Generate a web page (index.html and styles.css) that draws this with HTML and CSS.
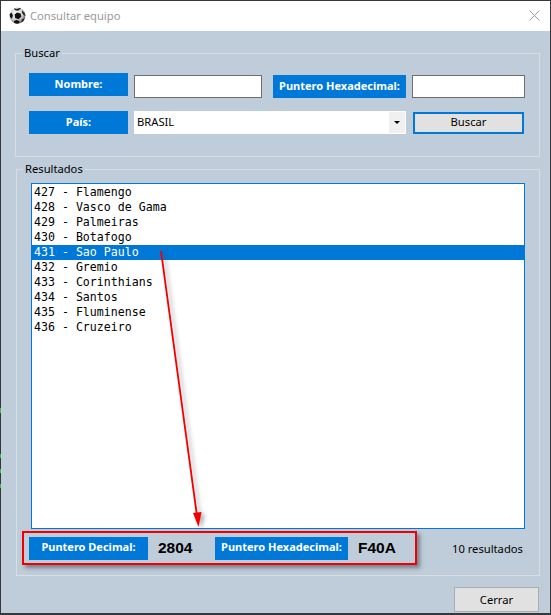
FILE: index.html
```html
<!DOCTYPE html>
<html lang="es">
<head>
    <meta charset="utf-8">
    <title>Consultar equipo</title>
    <link rel="stylesheet" href="styles.css">
</head>
<body>
    <i class="tick tick1"></i>
    <i class="tick tick2"></i>
    <i class="tick tick3"></i>
    <i class="tick tick4"></i>

    <div class="window">
        <div class="titlebar">
            <svg class="ball" width="17" height="17" viewBox="0 0 17 17">
                <defs>
                    <radialGradient id="ballShade" cx="40%" cy="35%" r="70%">
                        <stop offset="0" stop-color="#ffffff"/>
                        <stop offset="0.65" stop-color="#c4c4c4"/>
                        <stop offset="1" stop-color="#555555"/>
                    </radialGradient>
                </defs>
                <circle cx="8.5" cy="8.5" r="8" fill="url(#ballShade)"/>
                <path d="M8 5.5l3.5 1 .8 3.3-2.8 2.4-3.3-1.2-.6-3.4z" fill="#111"/>
                <path d="M5 1.2l3 .8 2.5-1 1.5.6-3 2.2-3-.6z" fill="#222"/>
                <path d="M.7 7l2 -1.5 1.2 3.3-1.2 3L1 10z" fill="#111"/>
                <path d="M13 3.5l2.6 2.5.9 3-1.9-1-1.6-2.5z" fill="#222"/>
                <path d="M5 14l2.6-1 2.6 1 .2 2.2-2.7.5-2.6-.7z" fill="#111"/>
                <path d="M13 12.5l2.5-1.5-1 3-2.2 1.5z" fill="#222"/>
            </svg>
            <span class="title">Consultar equipo</span>
            <svg class="close" width="11" height="11" viewBox="0 0 11 11">
                <path d="M.5 .5l10 10M10.5 .5l-10 10" stroke="#9a9a9a" stroke-width="1" fill="none"/>
            </svg>
        </div>

        <div class="content">
            <fieldset class="group search">
                <legend>Buscar</legend>
                <div class="search-grid">
                    <div class="tag">Nombre:</div>
                    <input class="field" type="text">
                    <div class="tag tag-hex">Puntero Hexadecimal:</div>
                    <input class="field" type="text">

                    <div class="tag">País:</div>
                    <div class="combo">
                        <span class="combo-text">BRASIL</span>
                        <span class="combo-arrow"></span>
                    </div>
                    <button class="btn btn-search" type="button">Buscar</button>
                </div>
            </fieldset>

            <fieldset class="group results">
                <legend>Resultados</legend>
                <ul class="list">
                    <li>427 - Flamengo</li>
                    <li>428 - Vasco de Gama</li>
                    <li>429 - Palmeiras</li>
                    <li>430 - Botafogo</li>
                    <li class="selected">431 - Sao Paulo</li>
                    <li>432 - Gremio</li>
                    <li>433 - Corinthians</li>
                    <li>434 - Santos</li>
                    <li>435 - Fluminense</li>
                    <li>436 - Cruzeiro</li>
                </ul>
                <div class="footer-row">
                    <div class="pointers">
                        <div class="tag tag-dec">Puntero Decimal:</div>
                        <span class="value value-dec">2804</span>
                        <div class="tag tag-hex">Puntero Hexadecimal:</div>
                        <span class="value">F40A</span>
                    </div>
                    <span class="count">10 resultados</span>
                </div>
            </fieldset>

            <div class="actions">
                <button class="btn btn-close" type="button">Cerrar</button>
            </div>
        </div>

        <!-- flecha roja sobre la lista -->
        <svg class="arrow" width="60" height="290" viewBox="0 0 60 290">
            <path d="M10 1L46 266" stroke="#f00000" stroke-width="1.8" fill="none"/>
            <path d="M47.5 277L42 263 50.5 262z" fill="#f00000"/>
        </svg>
    </div>
</body>
</html>
```

FILE: styles.css
```css
html, body {
    margin: 0;
    height: 100%;
}

body {
    background-color: #34383c;
    overflow: hidden;
    padding: 1px 1px 2px 1px;
    box-sizing: border-box;
    font-family: "Noto Sans", sans-serif;
    font-size: 11.2px;
    color: #000;
}

.tick {
    position: absolute;
    left: 0;
    width: 1px;
    height: 4px;
    background-color: #35c04a;
}
.tick1 { top: 408px; height: 5px; }
.tick2 { top: 454px; }
.tick3 { top: 469px; }
.tick4 { top: 484px; }

.window {
    position: relative;
    width: 549px;
    height: 612px;
    background-color: #bfccd9;
    display: flex;
    flex-direction: column;
}

.titlebar {
    height: 30px;
    flex: none;
    background-color: #fff;
    display: flex;
    align-items: center;
    padding: 0 10px 0 8px;
}

.ball {
    margin-right: 4px;
    margin-top: -1px;
}

.title {
    color: #999;
    flex: 1;
    padding-bottom: 2px;
}

.close {
    margin-top: -1px;
}

.content {
    flex: 1;
    padding: 16px 10px 0 14px;
    display: flex;
    flex-direction: column;
}

.group {
    margin: 0;
    border: 1px solid #d9dee3;
    min-width: 0;
}

.group legend {
    padding: 0 2px 2px;
    margin-left: -7px;
    line-height: 11px;
}

.search {
    height: 110px;
    box-sizing: border-box;
    padding: 13px 13px 0 13px;
}

.search-grid {
    display: grid;
    grid-template-columns: 99px 128px 138px 113px;
    grid-template-rows: 25px 23px;
    column-gap: 6px;
    row-gap: 13px;
}

.search-grid .field,
.search-grid .tag-hex {
    margin-top: 2px;
}

.search-grid .tag-hex {
    justify-self: end;
}

.tag {
    height: 23px;
    box-sizing: border-box;
    padding-bottom: 3px;
    background-color: #0078d7;
    color: #fff;
    font-weight: bold;
    font-size: 11px;
    display: flex;
    align-items: center;
    justify-content: center;
    white-space: nowrap;
}

.field {
    height: 23px;
    box-sizing: border-box;
    border: 1px solid #6e6e6e;
    background-color: #fff;
    padding: 0;
    outline: none;
}

.combo {
    grid-column: 2 / 4;
    height: 23px;
    background-color: #fff;
    display: flex;
    align-items: center;
    padding: 1px;
    box-sizing: border-box;
}

.combo-text {
    flex: 1;
    padding: 0 0 2px 2px;
}

.combo-arrow {
    width: 16px;
    height: 21px;
    background-color: #f0f0f0;
    position: relative;
}

.combo-arrow::after {
    content: "";
    position: absolute;
    left: 5px;
    top: 9px;
    border-left: 3px solid transparent;
    border-right: 3px solid transparent;
    border-top: 3px solid #000;
}

.btn {
    font-family: "Noto Sans", sans-serif;
    font-size: 11.2px;
    color: #000;
    background-color: #e1e1e1;
    padding: 0;
    box-sizing: border-box;
}

.btn-search {
    width: 111px;
    height: 22px;
    margin-top: 1px;
    margin-left: 1px;
    padding-bottom: 3px;
    border: 2px solid #0078d7;
}

.results {
    margin-top: 6px;
    margin-left: 1px;
    height: 413px;
    box-sizing: border-box;
    padding: 7px 14px 0 14px;
}

.results legend {
    margin-left: -8px;
}

.list {
    list-style: none;
    margin: 0;
    padding: 1px 0 0 0;
    height: 346px;
    box-sizing: border-box;
    border: 1px solid #0078d7;
    background-color: #fff;
    font-family: "DejaVu Sans Mono", monospace;
    font-size: 11.6px;
    line-height: 15px;
}

.list li {
    height: 15px;
    padding-left: 2px;
    white-space: pre;
}

.list .selected {
    background-color: #0078d7;
    color: #fff;
}

.footer-row {
    display: flex;
    align-items: center;
    margin-top: 2px;
    margin-left: -9px;
}

.pointers {
    width: 395px;
    height: 34px;
    box-sizing: border-box;
    border: 2px solid #f00000;
    box-shadow: 3px 3px 4px rgba(60, 70, 80, 0.55);
    display: flex;
    align-items: center;
    padding-left: 5px;
}

.tag-dec {
    width: 119px;
}

.value {
    font-family: "Liberation Sans", sans-serif;
    font-weight: bold;
    font-size: 15.5px;
    margin-left: 10px;
}

.value-dec {
    width: 57px;
}

.tag-hex {
    width: 133px;
}

.count {
    margin-left: 35px;
    white-space: nowrap;
    padding-top: 1px;
}

.actions {
    display: flex;
    justify-content: flex-end;
    margin-top: 11px;
    margin-right: 1px;
}

.btn-close {
    width: 85px;
    height: 25px;
    border: 1px solid #adadad;
}

.arrow {
    position: absolute;
    left: 150px;
    top: 249px;
    overflow: visible;
    filter: drop-shadow(3px 2px 2px rgba(70, 70, 70, 0.45));
}
```
